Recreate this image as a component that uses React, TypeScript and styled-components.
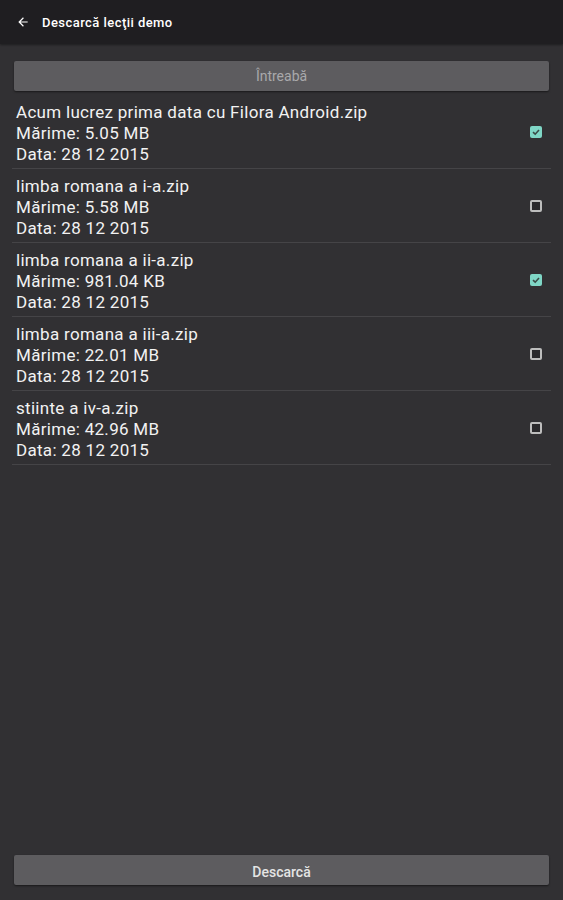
import styled, { createGlobalStyle } from "styled-components"

const GlobalStyle = createGlobalStyle`
  html, body {
    margin: 0;
    padding: 0;
    background: #313033;
    font-family: Roboto, "Noto Sans", sans-serif;
  }
`

const files = [
  { name: "Acum lucrez prima data cu Filora Android.zip", size: "5.05 MB", checked: true },
  { name: "limba romana a i-a.zip", size: "5.58 MB", checked: false },
  { name: "limba romana a ii-a.zip", size: "981.04 KB", checked: true },
  { name: "limba romana a iii-a.zip", size: "22.01 MB", checked: false },
  { name: "stiinte a iv-a.zip", size: "42.96 MB", checked: false },
]

function App() {
  return (
    <Screen>
      <GlobalStyle />
      <Toolbar>
        <svg width="14" height="14" viewBox="0 0 24 24">
          <path
            d="M20 11H7.83l5.59-5.59L12 4l-8 8 8 8 1.41-1.41L7.83 13H20v-2z"
            fill="#fff"
          />
        </svg>
        <Title>Descarcă lecţii demo</Title>
      </Toolbar>
      <Content>
        <Button>Întreabă</Button>
        <List>
          {files.map((f) => (
            <Row key={f.name}>
              <Info>
                <Line>{f.name}</Line>
                <Line>Mărime: {f.size}</Line>
                <Line>Data: 28 12 2015</Line>
              </Info>
              <Check $checked={f.checked}>
                {f.checked && (
                  <svg width="10" height="10" viewBox="0 0 10 10">
                    <path
                      d="M2 5.2 L4.2 7.2 L8 3"
                      fill="none"
                      stroke="#3a4a47"
                      strokeWidth="1.6"
                    />
                  </svg>
                )}
              </Check>
            </Row>
          ))}
        </List>
        <Spacer />
        <Button $bold>Descarcă</Button>
      </Content>
    </Screen>
  )
}

export default App

const Screen = styled.div`
  display: flex;
  flex-direction: column;
  height: 100vh;
  background: #313033;
`

const Toolbar = styled.div`
  height: 44px;
  flex-shrink: 0;
  display: flex;
  align-items: center;
  gap: 12px;
  padding-left: 16px;
  background: #1f1e21;
  box-shadow: 0 1px 2px rgba(0, 0, 0, 0.4);
`

const Title = styled.span`
  color: #fff;
  font-size: 13px;
  font-weight: 500;
  letter-spacing: 0.45px;
`

const Content = styled.div`
  flex: 1;
  display: flex;
  flex-direction: column;
  padding: 17px 12px 15px;
`

const Button = styled.div<{ $bold?: boolean }>`
  margin: 0 2px;
  height: 30px;
  display: flex;
  align-items: center;
  justify-content: center;
  background: #5d5c5f;
  border-radius: 2px;
  box-shadow: 0 1px 2px rgba(0, 0, 0, 0.5);
  color: ${(p) => (p.$bold ? "#e4e4e4" : "#a9a9ab")};
  font-size: 14px;
  font-weight: ${(p) => (p.$bold ? 500 : 400)};
  padding-top: ${(p) => (p.$bold ? "3px" : "0")};
  box-sizing: border-box;
`

const List = styled.div`
  margin-top: 4px;
  display: flex;
  flex-direction: column;
`

const Row = styled.div`
  display: flex;
  align-items: center;
  padding: 7px 0 3px 4px;
  border-bottom: 1px solid #454447;
`

const Info = styled.div`
  flex: 1;
  display: flex;
  flex-direction: column;
`

const Line = styled.div`
  color: #f2f2f2;
  font-size: 17px;
  letter-spacing: 0.3px;
  line-height: 21px;
`

const Check = styled.div<{ $checked: boolean }>`
  width: 12px;
  height: 12px;
  margin: 0 9px 4px 0;
  box-sizing: border-box;
  border-radius: 2px;
  display: flex;
  align-items: center;
  justify-content: center;
  background: ${(p) => (p.$checked ? "#7fd6c6" : "#2a292c")};
  border: ${(p) => (p.$checked ? "none" : "2px solid #bdbdbd")};
`

const Spacer = styled.div`
  flex: 1;
`
